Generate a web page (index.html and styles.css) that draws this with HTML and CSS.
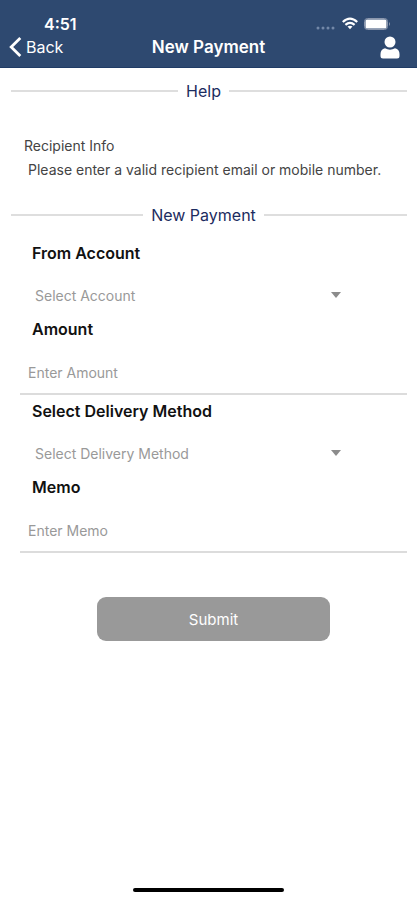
FILE: index.html
```html
<!DOCTYPE html>
<html lang="en">
<head>
<meta charset="utf-8">
<meta name="viewport" content="width=device-width, initial-scale=1">
<title>New Payment</title>
<link rel="stylesheet" href="styles.css">
</head>
<body>
<header class="top">
  <div class="status">
    <span class="time">4:51</span>
    <span class="signals">
      <svg width="20" height="4" viewBox="0 0 20 4" fill="#7388a8" aria-hidden="true"><circle cx="2" cy="2" r="1.5"/><circle cx="7" cy="2" r="1.5"/><circle cx="12" cy="2" r="1.5"/><circle cx="17" cy="2" r="1.5"/></svg>
      <svg class="wifi" width="16" height="13" viewBox="0 0 16 13" fill="none" stroke="#fff" stroke-width="2.2" aria-hidden="true"><path d="M.8 5Q8-1.8 15.2 5M3.4 7.9Q8 3.8 12.6 7.9"/><path d="M5.5 9.6Q8 7.7 10.5 9.6L8 12.3Z" fill="#fff" stroke="none"/></svg>
      <svg width="27" height="12" viewBox="0 0 27 12" aria-hidden="true"><rect x=".5" y=".5" width="23" height="11" rx="3" fill="none" stroke="#8b97ad"/><rect x="1.5" y="1.5" width="21" height="9" rx="1.5" fill="#fff"/><path d="M25 4q2 2 0 4z" fill="#8b97ad"/></svg>
    </span>
  </div>
  <nav class="bar">
    <a class="back" href="#"><svg width="13" height="20" viewBox="0 0 13 20" fill="none" stroke="#fff" stroke-width="2.8" aria-hidden="true"><path d="M11.3 1L2.2 10l9.100 9"/></svg>Back</a>
    <h1>New Payment</h1>
    <button class="profile" type="button" aria-label="Profile"><svg width="20" height="23" viewBox="0 0 20 23" fill="#fff" aria-hidden="true"><circle cx="10" cy="6" r="5.5"/><path d="M5 12.300Q10 15 15 12.300Q19.500 13.500 19.500 18v2q0 2.500-2.500 2.500H3Q.5 22.500.5 20v-2Q.5 13.500 5 12.300Z"/></svg></button>
  </nav>
</header>
<main>
  <h2 class="divider">Help</h2>
  <section class="help">
    <h3>Recipient Info</h3>
    <p>Please enter a valid recipient email or mobile number.</p>
  </section>
  <h2 class="divider">New Payment</h2>
  <form class="form">
    <label for="account">From Account</label>
    <div class="pick">
      <select id="account"><option>Select Account</option></select>
      <svg width="10" height="6" viewBox="0 0 10 6" fill="#8c8c8c" aria-hidden="true"><path d="M0 0h10L5 6z"/></svg>
    </div>
    <label for="amount">Amount</label>
    <input id="amount" type="text" placeholder="Enter Amount">
    <label for="method">Select Delivery Method</label>
    <div class="pick">
      <select id="method"><option>Select Delivery Method</option></select>
      <svg width="10" height="6" viewBox="0 0 10 6" fill="#8c8c8c" aria-hidden="true"><path d="M0 0h10L5 6z"/></svg>
    </div>
    <label for="memo">Memo</label>
    <input id="memo" type="text" placeholder="Enter Memo">
    <button class="submit" type="submit">Submit</button>
  </form>
</main>
<footer class="home"></footer>
</body>
</html>
```
FILE: styles.css
```css
* { box-sizing: border-box; }
body {
  margin: 0;
  min-height: 100vh;
  display: flex;
  flex-direction: column;
  background: #fff;
  color: #111;
  font-family: Inter, "Liberation Sans", sans-serif;
  font-size: 14px;
}
h1, h2, h3, p { margin: 0; }
button, input, select { font: inherit; border: 0; background: none; padding: 0; }
main { flex: 1; }

.top {
  background: #2e4970;
  border-bottom: 1px solid #203c66;
  color: #fff;
  padding-top: 12px;
}
.status {
  display: flex;
  justify-content: space-between;
  align-items: center;
  height: 23px;
  padding: 0 26px 0 44px;
}
.time { font-size: 16px; font-weight: 600; }
.signals { display: flex; align-items: center; gap: 6px; }
.signals svg:first-child { margin-top: 8px; }
.bar {
  display: grid;
  grid-template-columns: 1fr auto 1fr;
  align-items: center;
  height: 24px;
  margin-bottom: 8px;
  padding: 0 9px;
}
.back {
  display: flex;
  align-items: center;
  gap: 4px;
  color: #fff;
  font-size: 16px;
  text-decoration: none;
}
h1 { font-size: 17px; font-weight: 600; line-height: 24px; }
.profile { justify-self: end; height: 24px; margin-right: 8px; }
.profile svg { display: block; }

.divider {
  display: grid;
  grid-template-columns: 1fr auto 1fr;
  align-items: center;
  gap: 8px;
  margin-top: 11px;
  padding-right: 10px;
  color: #1c2c60;
  font-size: 16px;
  font-weight: 400;
  line-height: 24px;
}
.divider::before, .divider::after { content: ""; height: 2px; background: #dedede; }
.divider::before { margin-left: 11px; }

.help { padding: 31px 24px 10px; color: #444; line-height: 24px; }
.help h3 { font-size: 14px; font-weight: 400; }
.help p { padding-left: 4px; font-size: 14px; white-space: nowrap; }

.form {
  display: flex;
  flex-direction: column;
  padding: 14px 10px 0 20px;
}
.form label {
  padding-left: 12px;
  color: #111;
  font-size: 16px;
  font-weight: 600;
  line-height: 24px;
}
.pick {
  display: grid;
  align-items: center;
  margin: 8px 66px 0 15px;
}
.pick select, .pick svg { grid-area: 1 / 1; }
.pick svg { justify-self: end; pointer-events: none; }
.pick select {
  appearance: none;
  width: 100%;
  height: 44px;
  color: #999;
}
.form input {
  height: 44px;
  margin: 10px 0 4px;
  padding: 0 8px;
  border-bottom: 2px solid #dcdcdc;
  color: #333;
}
.form input::placeholder { color: #999; opacity: 1; }
.submit {
  align-self: center;
  width: 60%;
  height: 44px;
  margin: 40px 0;
  border-radius: 9px;
  background: #999;
  color: #fff;
  font-size: 15px;
}
.home {
  width: 36%;
  height: 4px;
  margin: 0 auto 8px;
  border-radius: 2px;
  background: #000;
}
```
